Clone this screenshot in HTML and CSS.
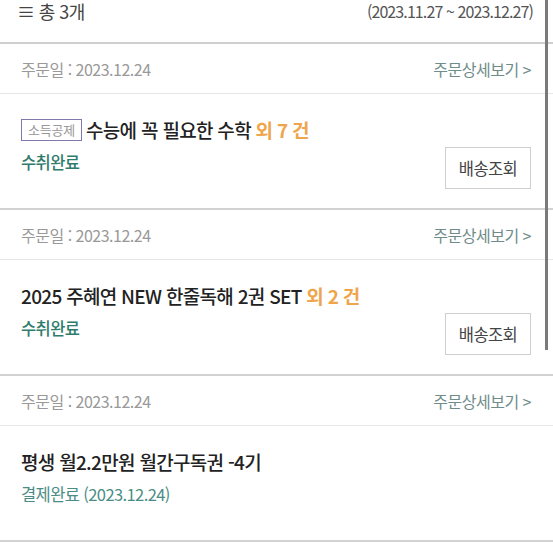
FILE: index.html
```html
<!DOCTYPE html>
<html lang="ko">
<head>
    <meta charset="UTF-8">
    <meta name="viewport" content="width=device-width, initial-scale=1.0">
    <title>주문내역</title>
    <link rel="stylesheet" href="styles.css">
</head>
<body>
    <div class="list-head">
        <span class="total">≡ 총 3개</span>
        <span class="period">(2023.11.27 ~ 2023.12.27)</span>
    </div>

    <div class="order">
        <div class="order-date">
            <span>주문일 : 2023.12.24</span>
            <a class="detail" href="#">주문상세보기 &gt;</a>
        </div>
        <div class="order-body">
            <div class="info">
                <div class="title"><span class="badge">소득공제</span>수능에 꼭 필요한 수학 <span class="more">외 7 건</span></div>
                <div class="status">수취완료</div>
            </div>
            <button class="track-btn">배송조회</button>
        </div>
    </div>

    <div class="order">
        <div class="order-date">
            <span>주문일 : 2023.12.24</span>
            <a class="detail" href="#">주문상세보기 &gt;</a>
        </div>
        <div class="order-body">
            <div class="info">
                <div class="title">2025 주혜연 NEW 한줄독해 2권 SET <span class="more">외 2 건</span></div>
                <div class="status">수취완료</div>
            </div>
            <button class="track-btn">배송조회</button>
        </div>
    </div>

    <div class="order">
        <div class="order-date">
            <span>주문일 : 2023.12.24</span>
            <a class="detail" href="#">주문상세보기 &gt;</a>
        </div>
        <div class="order-body">
            <div class="info">
                <div class="title">평생 월2.2만원 월간구독권 -4기</div>
                <div class="status paid">결제완료 (2023.12.24)</div>
            </div>
        </div>
    </div>

    <div class="scroll-thumb"></div>
</body>
</html>
```

FILE: styles.css
```css
body {
    font-family: 'Noto Sans CJK KR', 'Noto Sans', sans-serif;
    color: #222;
    margin: 0;
    background: #fff;
    letter-spacing: -0.6px;
}
.list-head {
    display: flex;
    justify-content: space-between;
    height: 42px;
    padding: 0 20px 0 17px;
    border-bottom: 2px solid #cfcfcf;
    line-height: 22px;
}
.total {
    font-size: 18px;
    color: #444;
}
.period {
    font-size: 16px;
    color: #555;
    letter-spacing: -0.9px;
}
.order {
    border-bottom: 2px solid #d2d2d2;
}
.order-date {
    display: flex;
    justify-content: space-between;
    align-items: center;
    height: 49px;
    padding: 0 22px 0 21px;
    border-bottom: 1px solid #e6e6e6;
    font-size: 16px;
    color: #999;
    letter-spacing: -0.5px;
}
.detail {
    color: #6f8c8a;
    text-decoration: none;
}
.order-body {
    display: flex;
    justify-content: space-between;
    height: 114px;
    padding: 0 22px 19px 21px;
    box-sizing: border-box;
}
.info {
    padding-top: 24px;
}
.title {
    font-size: 19px;
    font-weight: 500;
    line-height: 24px;
    letter-spacing: -0.7px;
    display: flex;
    align-items: center;
    white-space: pre;
}
.badge {
    border: 1px solid #7d7aab;
    color: #999;
    font-size: 13px;
    font-weight: 400;
    line-height: 20px;
    padding: 0 6px;
    margin-right: 4px;
    letter-spacing: -0.2px;
}
.more {
    color: #eea54c;
    font-weight: 700;
}
.status {
    margin-top: 8px;
    font-size: 16.5px;
    line-height: 24px;
    font-weight: 500;
    color: #2f7c6c;
}
.status.paid {
    font-weight: 400;
    color: #4a8d84;
}
.track-btn {
    align-self: flex-end;
    width: 86px;
    height: 42px;
    border: 1px solid #cfcfcf;
    background: #fff;
    color: #444;
    font-family: inherit;
    font-size: 16.5px;
    letter-spacing: -0.6px;
    padding: 0;
}
.scroll-thumb {
    position: absolute;
    top: 0;
    right: 5px;
    width: 3px;
    height: 350px;
    background: #7a7a7a;
}
```
